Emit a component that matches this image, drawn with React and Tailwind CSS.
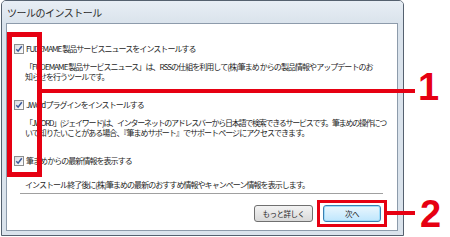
import React from "react";

const Check = () => (
  <span className="flex h-[10px] w-[10px] shrink-0 items-center justify-center border border-[#8e8f8f] bg-gradient-to-br from-[#d8dbe0] to-[#ffffff]">
    <svg viewBox="0 0 8 8" className="h-[8px] w-[8px]">
      <path d="M1.3 4.3 L3.1 6.2 L6.8 1.2" fill="none" stroke="#3b5a9a" strokeWidth="1.5" />
    </svg>
  </span>
);

const Row = ({ children, className }) => (
  <div className={"flex h-[10px] items-center gap-[2px] pl-[7px] " + className}>
    <Check />
    <span className="whitespace-nowrap text-[8px] leading-[10px] tracking-[-0.95px]">{children}</span>
  </div>
);

const Desc = ({ children, className }) => (
  <div className={"whitespace-nowrap pl-[18px] text-[8px] leading-[10px] tracking-[-0.95px] " + className}>{children}</div>
);

export default function App() {
  return (
    <div className="relative h-[237px] w-[450px] overflow-hidden bg-white font-['Noto_Sans_CJK_JP',sans-serif] text-[#1e1e1e]">
      <div className="ml-[1px] flex h-[236px] w-[403px] flex-col rounded-t-[5px] border border-[#55616f] bg-[#dae3ec] pb-[4px] pl-[4px] pr-[5px]">
        <div className="-ml-[4px] -mr-[5px] flex h-[22px] items-center rounded-t-[4px] bg-gradient-to-b from-[#e8eef5] to-[#dae3ec] pl-[5px] text-[10px] tracking-[-0.5px] text-[#2a2a2a]">
          ツールのインストール
        </div>
        <div className="flex flex-1 flex-col border border-[#8d9bab] bg-white">
          <Row className="mt-[20px]">FUDEMAME 製品サービスニュースをインストールする</Row>
          <Desc className="mt-[8px]">
            「FUDEMAME 製品サービスニュース」は、RSSの仕組を利用して(株)筆まめ からの製品情報やアップデートのお
            <br />
            知らせを行うツールです。
          </Desc>
          <Row className="mt-[18px]">JWordプラグインをインストールする</Row>
          <Desc className="mt-[8px]">
            <span className="tracking-[-1.25px]">
              「JWORD」(ジェイワード)は、インターネットのアドレスバーから日本語で検索できるサービスです。筆まめの操作につ
            </span>
            <br />
            いて知りたいことがある場合、『筆まめサポート』でサポートページにアクセスできます。
          </Desc>
          <Row className="mt-[18px]">筆まめからの最新情報を表示する</Row>
          <Desc className="mt-[14px]">
            インストール終了後に(株)筆まめの最新のおすすめ情報やキャンペーン情報を表示します。
          </Desc>
          <div className="ml-[13px] mr-[14px] mt-[3px] h-[2px] border-t border-[#a0a0a0] border-b-white" />
          <div className="mt-[10px] flex justify-end gap-[10px] pr-[16px]">
            <div className="flex h-[17px] w-[59px] items-center justify-center rounded-[3px] border border-[#707070] bg-gradient-to-b from-[#f3f3f3] to-[#d9d9d9] text-[7.5px] tracking-[-0.5px]">
              もっと詳しく
            </div>
            <div className="flex h-[17px] w-[58px] items-center justify-center rounded-[3px] border border-[#3c7fb1] bg-gradient-to-b from-[#eaf6fd] to-[#bee6fd] text-[7.5px] tracking-[-0.5px] shadow-[inset_0_0_0_1px_#9fdcfa]">
              次へ
            </div>
          </div>
        </div>
      </div>

      <div className="absolute left-[7px] top-[32px] h-[145px] w-[35px] border-[5px] border-[#e60012]" />
      <div className="absolute left-[42px] top-[89px] h-[4px] w-[373px] bg-[#e60012]" />
      <div className="absolute left-[418px] top-[68px] font-['Liberation_Sans',sans-serif] text-[38px] font-bold leading-[38px] text-[#e60012]">1</div>

      <div className="absolute left-[317px] top-[200px] h-[27px] w-[70px] border-[3px] border-[#e60012]" />
      <div className="absolute left-[387px] top-[211px] h-[4px] w-[28px] bg-[#e60012]" />
      <div className="absolute left-[420px] top-[195px] font-['Liberation_Sans',sans-serif] text-[38px] font-bold leading-[38px] text-[#e60012]">2</div>
    </div>
  );
}
